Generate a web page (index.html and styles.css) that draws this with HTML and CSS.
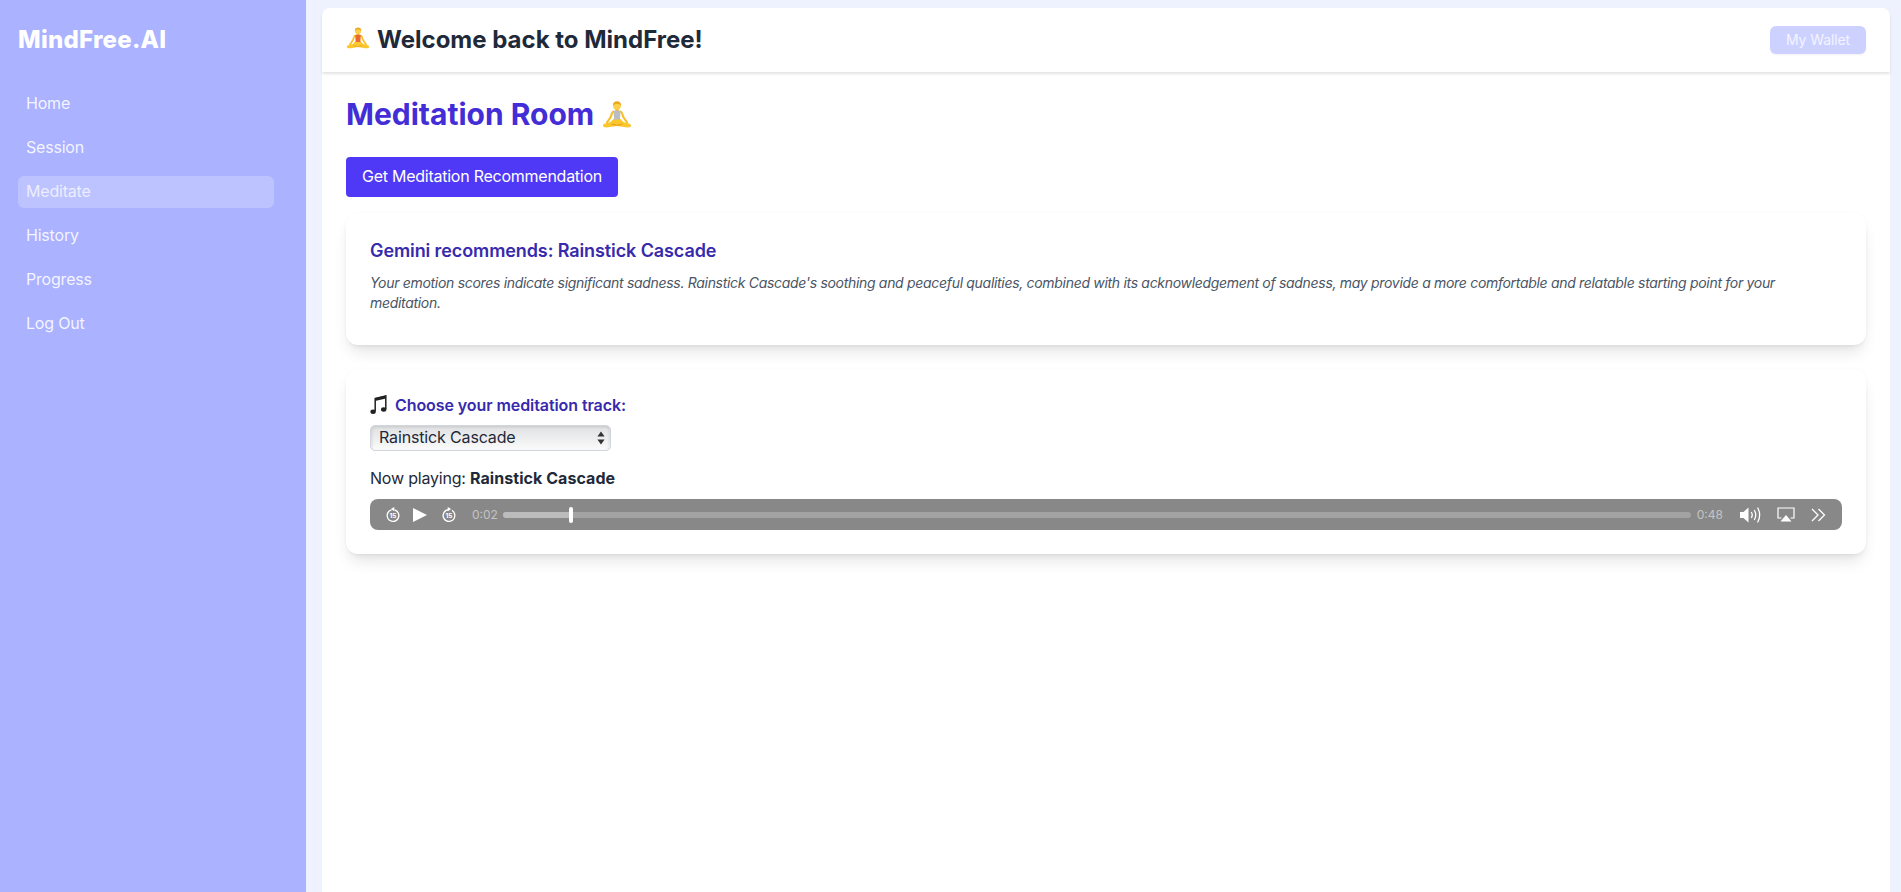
FILE: index.html
```html
<!DOCTYPE html>
<html lang="en">
<head>
<meta charset="utf-8">
<title>MindFree.AI</title>
<link rel="stylesheet" href="styles.css">
</head>
<body>
<svg class="defs" width="0" height="0">
  <defs>
    <g id="yogi">
      <path d="M11.500 10.500C9.500 11 9.700 14 8.700 16L5 21.500M18.500 10.500C20.500 11 20.300 14 21.300 16L25 21.500" fill="none" stroke="#f7bf2a" stroke-width="2.200" stroke-linecap="round"/>
      <path d="M1 24.200C1.800 22 5.500 22.200 8.500 21L11.500 18H18.500L21.500 21C24.500 22.200 28.200 22 29 24.200 29.500 26.700 25 26.700 22 26.100L15 24.900 8 26.100C5 26.700 .5 26.700 1 24.200Z" fill="#fcc62d"/>
      <path d="M8.500 23.200C11 22.500 13 22.800 15 24 17 22.800 19 22.500 21.500 23.200L15 24.900Z" fill="#e9a31c"/>
      <rect x="13.300" y="7" width="3.400" height="3.500" fill="#f5b520"/>
      <circle cx="15" cy="4.800" r="3.900" fill="#fcd04a"/>
      <path d="M10.900 4.800C10.800 1.600 12.700 .3 15 .3S19.200 1.600 19.100 4.800C18 3.500 16.500 2.800 15 3 13.500 2.800 12 3.500 10.900 4.800Z" fill="#eda81d"/>
    </g>
  </defs>
</svg>
<div class="app">
  <aside class="sidebar">
    <div class="brand">MindFree.AI</div>
    <nav class="nav">
      <a class="nav-item">Home</a>
      <a class="nav-item">Session</a>
      <a class="nav-item active">Meditate</a>
      <a class="nav-item">History</a>
      <a class="nav-item">Progress</a>
      <a class="nav-item">Log Out</a>
    </nav>
  </aside>
  <div class="shell">
    <div class="panel">
      <header class="topbar">
        <h2 class="welcome">
          <svg class="yogi-small" viewBox="0 0 30 27" width="24" height="22"><use href="#yogi"/><path d="M11.500 10C12.500 9.300 17.500 9.300 18.500 10L18 18.500H12Z" fill="#ea6a2a"/></svg>
          <span>Welcome back to MindFree!</span>
        </h2>
        <button class="wallet">My Wallet</button>
      </header>
      <main class="content">
        <h1 class="title">
          <span>Meditation Room</span>
          <svg class="yogi-big" viewBox="0 0 30 27" width="30" height="27"><use href="#yogi"/><path d="M11.500 10C12.500 9.300 17.500 9.300 18.500 10L18 18.500H12Z" fill="#b9bdc2"/></svg>
        </h1>
        <button class="primary">Get Meditation Recommendation</button>
        <section class="card rec">
          <h3 class="rec-title">Gemini recommends: Rainstick Cascade</h3>
          <p class="rec-text">Your emotion scores indicate significant sadness. Rainstick Cascade's soothing and peaceful qualities, combined with its acknowledgement of sadness, may provide a more comfortable and relatable starting point for your meditation.</p>
        </section>
        <section class="card player">
          <label class="track-label">
            <svg class="note" viewBox="0 0 17 20" width="17" height="20"><path d="M5.200 16V3.500L15.800 1V14" fill="none" stroke="#222" stroke-width="1.500"/><path d="M5 3 16 .5V3.500L5 6Z" fill="#222"/><ellipse cx="3.100" cy="16.700" rx="2.700" ry="2.200" fill="#222"/><ellipse cx="13.700" cy="14.500" rx="2.700" ry="2.200" fill="#222"/></svg>
            <span>Choose your meditation track:</span>
          </label>
          <div class="select">
            <span>Rainstick Cascade</span>
            <svg class="select-arrows" viewBox="0 0 8 14" width="8" height="14"><path d="M4 0.5 7.600 5.500H.4ZM4 13.500 .4 8.500H7.600Z" fill="#333"/></svg>
          </div>
          <p class="now">Now playing: <strong>Rainstick Cascade</strong></p>
          <div class="audio">
            <svg class="ico" viewBox="0 0 18 18" width="18" height="18"><circle cx="9" cy="9.500" r="5.900" fill="none" stroke="#fff" stroke-width="1.300" stroke-dasharray="33 4.100" transform="rotate(-75 9 9.500)"/><path d="M10.300 .9V5.300L6.800 3.100Z" fill="#fff"/><text x="9" y="12" class="ico-num">15</text></svg>
            <svg class="ico play" viewBox="0 0 14 16" width="14" height="16"><path d="M0 1V15L14 8Z" fill="#fff"/></svg>
            <svg class="ico fwd" viewBox="0 0 18 18" width="18" height="18"><circle cx="9" cy="9.500" r="5.900" fill="none" stroke="#fff" stroke-width="1.300" stroke-dasharray="33 4.100" transform="rotate(-60 9 9.500)"/><path d="M7.700 .9V5.300L11.200 3.100Z" fill="#fff"/><text x="9" y="12" class="ico-num">15</text></svg>
            <span class="time start">0:02</span>
            <div class="track"><div class="fill"></div><div class="thumb"></div></div>
            <span class="time end">0:48</span>
            <svg class="ico vol" viewBox="0 0 24 18" width="24" height="18"><path d="M1 6H4.500L9.500 1.500V16.500L4.500 12H1Z" fill="#fff"/><path d="M12.500 6.500Q14 9 12.500 11.500M15.500 4.500Q18 9 15.500 13.500M18.800 2Q22.500 9 18.800 16" fill="none" stroke="#fff" stroke-width="1.300" stroke-linecap="round"/></svg>
            <svg class="ico air" viewBox="0 0 18 15" width="18" height="15"><path d="M4.500 11H1V1H17V11H13.500" fill="none" stroke="#fff" stroke-width="1.200"/><path d="M9 8 14.500 14.500H3.500Z" fill="#fff"/></svg>
            <svg class="ico more" viewBox="0 0 15 14" width="15" height="14"><path d="M1 1 7 7 1 13M7.500 1 13.500 7 7.500 13" fill="none" stroke="#fff" stroke-width="1.300"/></svg>
          </div>
        </section>
      </main>
    </div>
  </div>
</div>
</body>
</html>
```
FILE: styles.css
```css
* { box-sizing: border-box; }
html, body { margin: 0; height: 100%; overflow: hidden; }
body {
  font-family: Inter, "Noto Sans", "Liberation Sans", sans-serif;
  color: #1e2939;
  background: #eef2ff;
}
.defs { position: absolute; }
.app { display: flex; height: 892px; }
.sidebar {
  width: 306px;
  flex: none;
  background: #abb2ff;
  color: #fff;
  padding: 24px 32px 24px 18px;
}
.brand { font-size: 24px; font-weight: 800; line-height: 32px; letter-spacing: .25px; }
.nav { display: flex; flex-direction: column; gap: 12px; margin-top: 32px; }
.nav-item {
  height: 32px;
  line-height: 31px;
  padding: 0 8px;
  border-radius: 6px;
  font-size: 16px;
  letter-spacing: -.2px;
  color: rgba(255, 255, 255, .88);
}
.nav-item.active { background: rgba(255, 255, 255, .22); color: rgba(255, 255, 255, .72); }
.shell { flex: 1; padding: 8px 11px 0 16px; min-width: 0; }
.panel { background: #fff; height: 100%; border-radius: 8px 8px 0 0; }
.topbar {
  height: 64px;
  display: flex;
  align-items: center;
  justify-content: space-between;
  padding: 0 24px;
  border-radius: 8px 8px 0 0;
  box-shadow: 0 2px 3px rgba(0, 0, 0, .11);
}
.welcome {
  display: flex;
  align-items: center;
  gap: 7px;
  margin: 0;
  font-size: 24px;
  line-height: 32px;
  font-weight: 700;
  color: #1e2939;
}
.yogi-small { margin-top: -4px; }
.wallet {
  width: 96px;
  height: 28px;
  padding: 0 0 1px;
  border: 0;
  border-radius: 6px;
  background: #cdd1ff;
  color: #f3f4ff;
  font: 14px Inter, sans-serif;
  letter-spacing: -.1px;
  box-shadow: 0 1px 2px rgba(0, 0, 0, .06);
}
.content { padding: 24px; }
.title {
  display: flex;
  align-items: center;
  gap: 8px;
  margin: 0 0 25px;
  font-size: 30px;
  line-height: 36px;
  font-weight: 700;
  color: #432dd7;
}
.primary {
  display: block;
  width: 272px;
  height: 40px;
  padding: 0 0 2px;
  border: 0;
  border-radius: 4px;
  background: #4f39f6;
  color: #fff;
  font: 16px Inter, sans-serif;
  letter-spacing: -.25px;
}
.card {
  background: #fff;
  border-radius: 12px;
  padding: 24px;
  box-shadow: 0 10px 15px -3px rgba(0, 0, 0, .1), 0 4px 6px -4px rgba(0, 0, 0, .1), 0 0 3px rgba(0, 0, 0, .03);
}
.rec { margin-top: 16px; }
.player { margin-top: 24px; }
.rec-title { margin: 0 0 8px; font-size: 18px; line-height: 28px; font-weight: 600; letter-spacing: -.1px; color: #372aac; }
.rec-text { margin: 0 0 8px; font-size: 14px; line-height: 20px; font-style: italic; letter-spacing: -.31px; color: #4a5565; }
.track-label {
  display: flex;
  align-items: center;
  gap: 8px;
  font-size: 16px;
  line-height: 24px;
  font-weight: 600;
  letter-spacing: -.08px;
  color: #372aac;
}
.select {
  position: relative;
  width: 241px;
  height: 26px;
  margin-top: 8px;
  padding-left: 8px;
  border: 1px solid #d1d5dc;
  border-radius: 5px;
  background: linear-gradient(#dfe0e2, #fbfbfb);
  box-shadow: inset 2px 2px 2px rgba(0, 0, 0, .06), inset -2px 0 2px rgba(0, 0, 0, .05);
  font-size: 16px;
  letter-spacing: -.15px;
  line-height: 23px;
  color: #1e2939;
}
.select-arrows { position: absolute; right: 5px; top: 5px; }
.now { margin: 15px 0 9px; font-size: 16px; line-height: 24px; color: #1e2939; letter-spacing: -.2px; }
.now strong { letter-spacing: .05px; }
.audio {
  display: flex;
  align-items: center;
  height: 31px;
  padding: 0 16px 0 14px;
  border-radius: 8px;
  background: #888;
}
.ico { flex: none; }
.ico-num { font: 700 6.500px Inter, sans-serif; fill: #fff; text-anchor: middle; }
.play { margin-left: 11px; }
.fwd { margin-left: 13px; }
.time { font-size: 12px; color: #c4c4c4; flex: none; }
.start { margin-left: 14px; }
.track {
  position: relative;
  flex: 1;
  height: 6px;
  margin: 0 6px 0 5px;
  border-radius: 3px;
  background: #a3a3a3;
}
.fill { height: 100%; width: 68px; border-radius: 3px; background: #bcbcbc; }
.thumb {
  position: absolute;
  left: 66px;
  top: -5px;
  width: 4px;
  height: 16px;
  border-radius: 2px;
  background: #fff;
}
.vol { margin-left: 16px; }
.air { margin-left: 14px; }
.more { margin-left: 16px; }
```
